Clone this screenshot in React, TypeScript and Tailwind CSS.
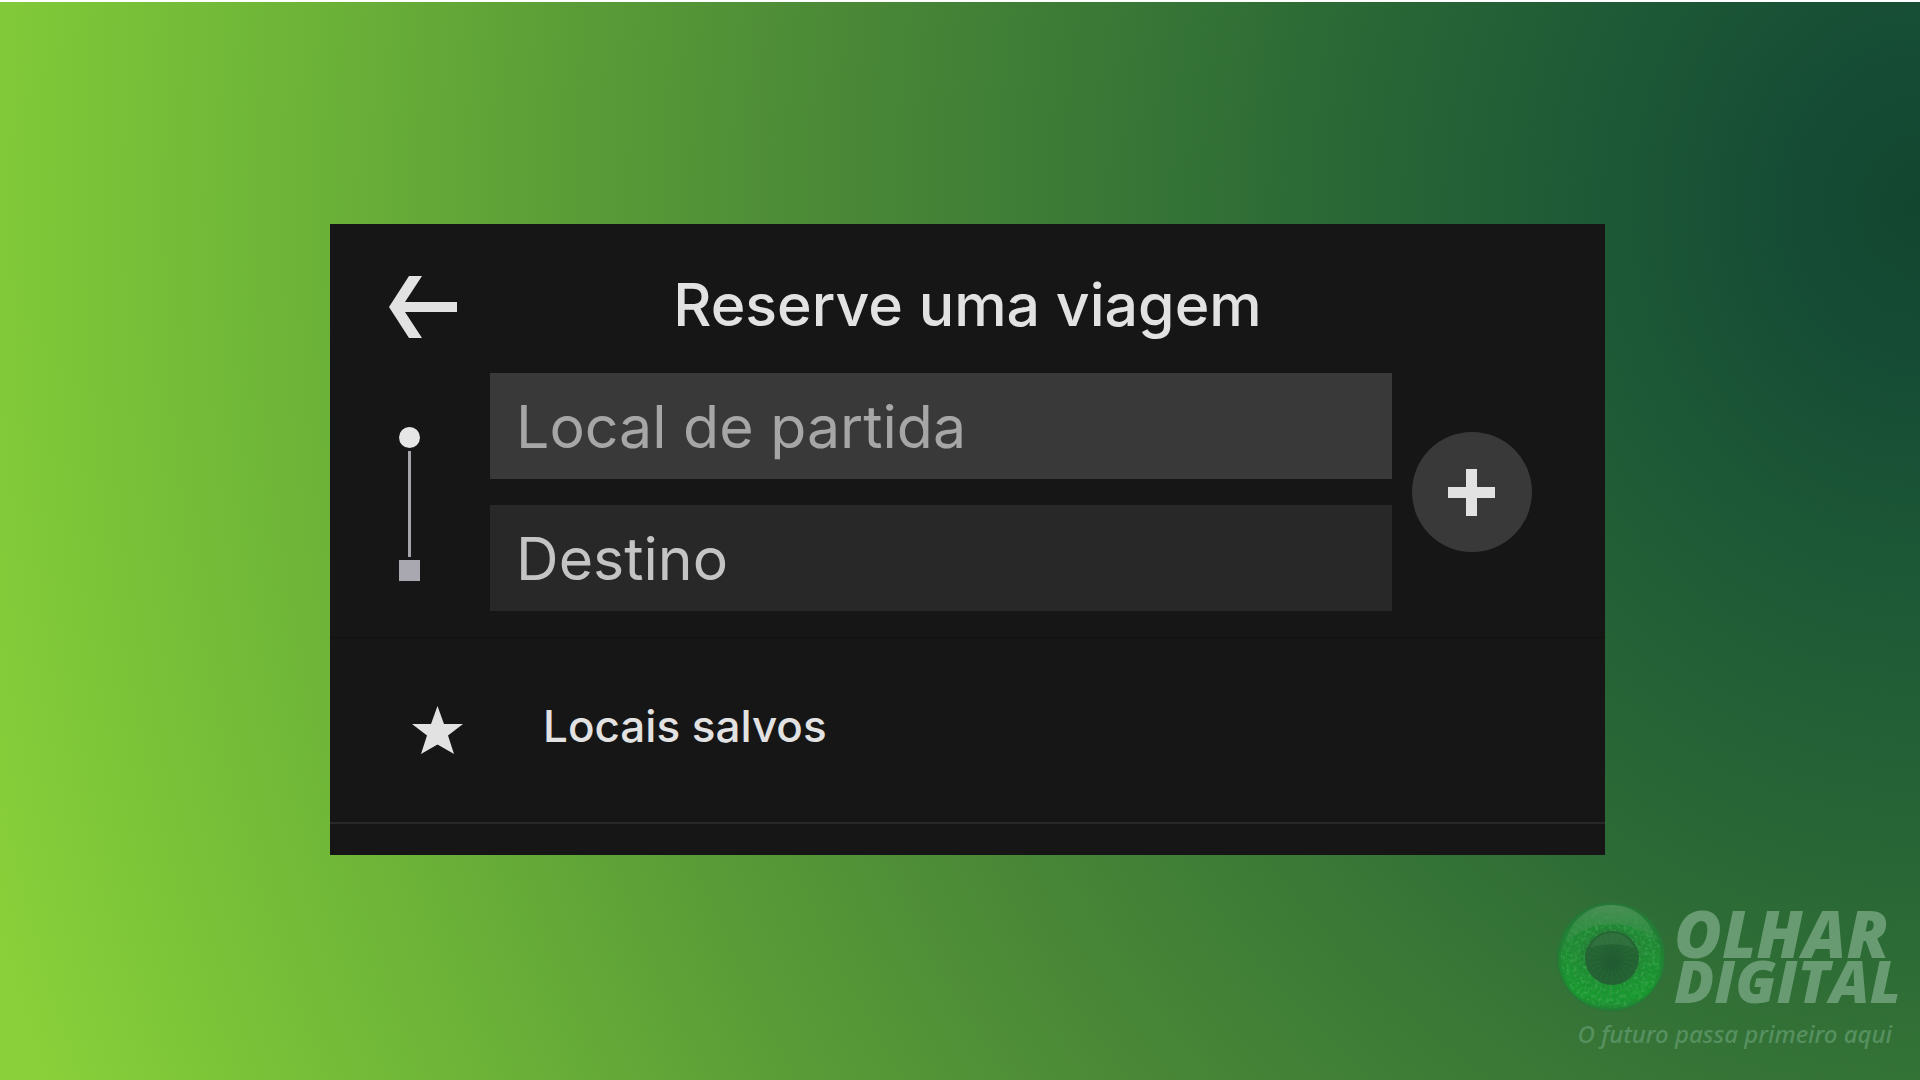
import React from "react";

function Eye() {
  const rays = Array.from({ length: 48 }, (_, i) => i * 7.5);
  return (
    <svg viewBox="0 0 110 110" className="size-[110px] shrink-0" aria-hidden="true">
      <defs>
        <radialGradient id="iris" cx="50%" cy="50%" r="50%">
          <stop offset="0.45" stopColor="#237a35" />
          <stop offset="0.6" stopColor="#1f8a33" />
          <stop offset="0.85" stopColor="#1f8a33" />
          <stop offset="0.95" stopColor="#237c35" />
          <stop offset="1" stopColor="#2b7038" stopOpacity="0.5" />
        </radialGradient>
        <linearGradient id="glow" x1="0" y1="0" x2="0" y2="1">
          <stop offset="0.4" stopColor="#12a52a" stopOpacity="0" />
          <stop offset="0.85" stopColor="#12a52a" stopOpacity="0.55" />
          <stop offset="1" stopColor="#12a52a" stopOpacity="0.1" />
        </linearGradient>
        <linearGradient id="shine" x1="0" y1="0" x2="0" y2="1">
          <stop offset="0" stopColor="#4f8f5a" stopOpacity="0.9" />
          <stop offset="1" stopColor="#3a8f4a" stopOpacity="0.25" />
        </linearGradient>
        <radialGradient id="pupil" cx="50%" cy="60%" r="55%">
          <stop offset="0" stopColor="#205a31" />
          <stop offset="1" stopColor="#266634" />
        </radialGradient>
        <filter id="speckle" x="0" y="0" width="1" height="1">
          <feTurbulence type="fractalNoise" baseFrequency="0.28" numOctaves="3" seed="4" />
          <feColorMatrix values="0 0 0 0 0.06  0 0 0 0 0.42  0 0 0 0 0.1  2.6 0 0 0 -1.1" />
          <feComposite in2="SourceGraphic" operator="in" />
        </filter>
      </defs>
      <circle cx="55" cy="55" r="55" fill="url(#iris)" />
      <circle cx="55" cy="55" r="53" fill="url(#glow)" />
      <circle cx="55" cy="56" r="50" fill="#1c9a32" filter="url(#speckle)" opacity="0.6" />
      <g stroke="#2c7f3c" strokeWidth="1" opacity="0.45">
        {rays.map((a) => (
          <line key={a} x1="55" y1="26" x2="55" y2="14" transform={`rotate(${a} 55 55)`} />
        ))}
      </g>
      <path d="M9 44C13 18 33 3 55 3s41 14 45 38C88 28 73 22 55 22S20 30 9 44Z" fill="url(#shine)" />
      <circle cx="56" cy="56" r="27" fill="url(#pupil)" />
      <g stroke="#2b7d38" strokeWidth="1" opacity="0.35">
        {rays.filter((_, i) => i % 2 === 0).map((a) => (
          <line key={a} x1="56" y1="80" x2="56" y2="68" transform={`rotate(${a} 56 56)`} />
        ))}
      </g>
      <path d="M34 46c4-9 12-15 22-15s18 6 22 15c-13-5-30-5-44 0Z" fill="#4d8a57" opacity="0.3" />
    </svg>
  );
}

function Brand() {
  return (
    <footer className="absolute right-6 bottom-6 flex flex-col items-end font-['Open_Sans',sans-serif] italic">
      <div className="flex items-center gap-2">
        <Eye />
        <div className="w-[222px] leading-[47px] font-extrabold whitespace-nowrap text-[#699b73]">
          <div className="text-[65px]">OLHAR</div>
          <div className="text-[59px]">DIGITAL</div>
        </div>
      </div>
      <p className="pr-1 font-['Noto_Sans',sans-serif] text-[24px] leading-[44px] font-medium text-[#579060]">O futuro passa primeiro aqui</p>
    </footer>
  );
}

export default function App() {
  return (
    <main className="relative flex min-h-screen flex-col items-center border-t-2 border-white bg-[radial-gradient(2020px_2380px_at_100%_19%,#13462f_0%,#154b35_6%,#1d5936_16%,#2a6836_29%,#3b7a36_42%,#4b8937_54%,#5a9d37_67%,#6cb338_80%,#7cc538_92%,#89d03a_100%)] pt-[222px] font-[Inter,sans-serif] text-[#e2e2e2]">
      <section className="ml-[15px] flex w-[66.4%] flex-col bg-[#161616] pb-[31px]">
        <header className="grid grid-cols-[126px_1fr_126px] items-center pt-11 pb-7">
          <button type="button" aria-label="Voltar" className="ml-[59px] w-[68px]">
            <svg viewBox="0 0 68 62" className="h-[62px] w-[68px]" aria-hidden="true">
              <path d="M20 0H33L16 26H68V36H16L33 62H20L0 31Z" fill="currentColor" />
            </svg>
          </button>
          <h1 className="pb-1 text-center text-[59px] leading-[73px] font-medium">Reserve uma viagem</h1>
        </header>
        <form className="flex items-center pr-[73px] pb-[26px] pl-[69px]" onSubmit={(e) => e.preventDefault()}>
          <svg viewBox="0 0 21 154" className="mt-6 mr-[70px] h-[154px] w-[21px] shrink-0" aria-hidden="true">
            <circle cx="10.5" cy="10.5" r="10.5" fill="#e6e6e6" />
            <path d="M10.5 24V130" stroke="#a5a4aa" strokeWidth="3" />
            <path d="M0 133h21v21H0z" fill="#a9a8b0" />
          </svg>
          <div className="flex min-w-0 flex-1 flex-col gap-[26px]">
            <input aria-label="Local de partida" placeholder="Local de partida" className="h-[106px] w-full bg-[#393939] px-[26px] text-[59px] outline-none placeholder:text-[#a6a6a6]" />
            <input aria-label="Destino" placeholder="Destino" className="h-[106px] w-full bg-[#282828] px-[26px] text-[59px] outline-none placeholder:text-[#c4c4c4]" />
          </div>
          <button type="button" aria-label="Adicionar parada" className="ml-5 flex size-[120px] shrink-0 items-center justify-center rounded-full bg-[#393939]">
            <svg viewBox="0 0 47 47" className="size-[47px]" aria-hidden="true">
              <path d="M18 0h11v18h18v11H29v18H18V29H0V18h18z" fill="currentColor" />
            </svg>
          </button>
        </form>
        <button type="button" className="flex h-[187px] items-center border-t border-b-2 border-t-[#111111] border-b-[#282828] pl-[82px] text-left">
          <svg viewBox="0 0 51 48" className="mr-20 h-12 w-[51px]" aria-hidden="true">
            <path d="M25.500 0 32 18H51L36 29.500 42 48 25.500 38.500 9 48 15 29.500 0 18H19Z" fill="currentColor" />
          </svg>
          <span className="pb-2 text-[44px] font-medium">Locais salvos</span>
        </button>
      </section>
      <Brand />
    </main>
  );
}
